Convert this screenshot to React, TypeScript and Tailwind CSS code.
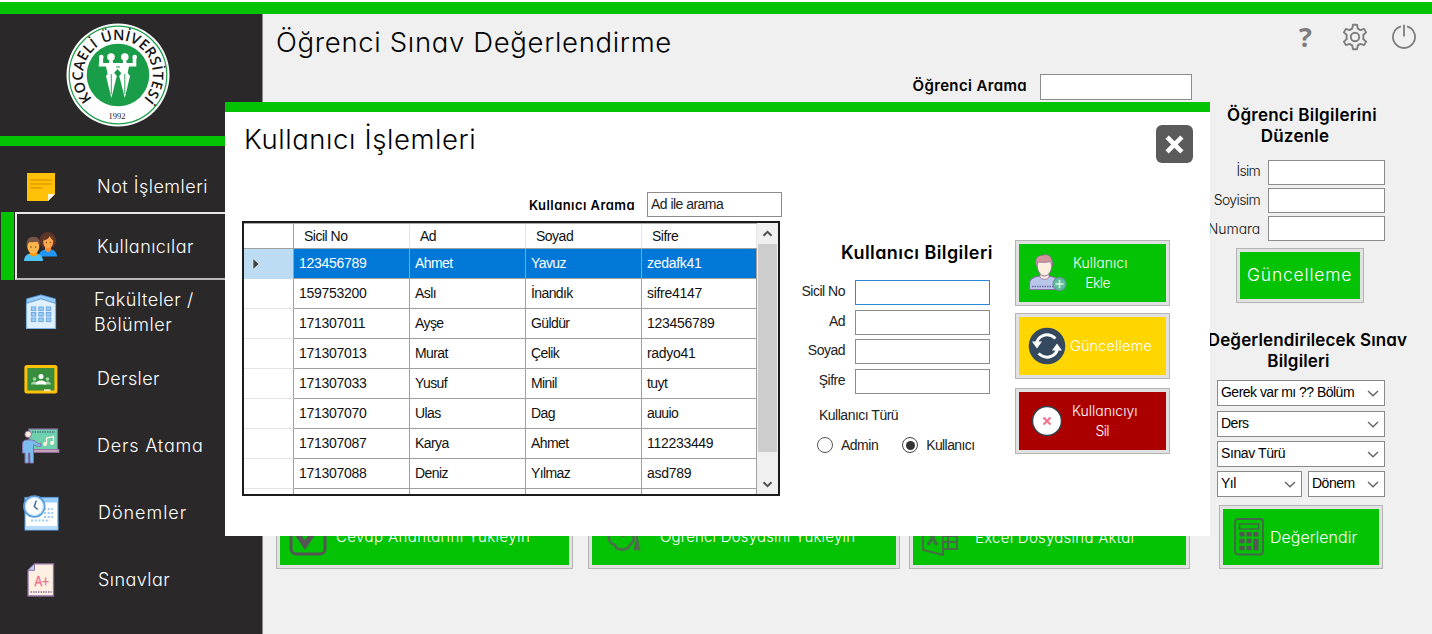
import type { ReactNode } from "react";

const gothic = "[font-family:Inter,sans-serif] [font-feature-settings:'cv11']";
const sans = "[font-family:'Liberation_Sans',Arial,sans-serif]";

function Logo() {
  return (
    <svg width="104" height="104" viewBox="0 0 104 104" className="block">
      <defs>
        <path id="ring" d="M 22.100 78.600 A 40 40 0 1 1 81.900 78.600" />
      </defs>
      <circle cx="52" cy="52" r="51.500" fill="#fff" />
      <circle cx="52" cy="52" r="48.800" fill="none" stroke="#1a9d49" strokeWidth="1.200" />
      <circle cx="52" cy="52" r="31.300" fill="#1a9d49" />
      <text fill="#151515" fontSize="14.500" fontWeight="600" fontFamily="Open Sans, sans-serif" dy="5">
        <textPath href="#ring" textLength="184" startOffset="0">
          KOCAELİ ÜNİVERSİTESİ
        </textPath>
      </text>
      <text x="51" y="96" textAnchor="middle" fontSize="8.500" fontFamily="Liberation Serif, serif" fill="#222">
        1992
      </text>
      <g fill="#fff">
        <circle cx="45" cy="34" r="3.800" />
        <circle cx="58.800" cy="34" r="3.800" />
        <path d="M33.500 34h3.600v6h6l.5-3h3l.5 3h9.600l.5-3h3l.5 3h6v-6h3.600v9.500h-7.300l-1.500 7h-6l-4-4.500-4 4.500h-6l-1.500-7h-7.300z" />
        <circle cx="35.300" cy="34" r="2.300" />
        <circle cx="68.700" cy="34" r="2.300" />
        <path d="M40 53 43 49h4.600L50.800 53 45.400 75z" />
        <path d="M53.200 53 56.400 49H61L64 53 58.800 75z" />
      </g>
      <path d="M45.300 51v20M58.800 51v20" stroke="#1a9d49" strokeWidth=".9" />
      <path d="M50 44h4" stroke="#1a9d49" strokeWidth="1" />
    </svg>
  );
}

function NoteIcon() {
  return (
    <svg width="36" height="36" viewBox="0 0 36 36">
      <path d="M4 4h28v21l-7 7H4z" fill="#ffc107" />
      <path d="M25 32v-7h7z" fill="#fff8e1" />
      <path d="M7 11h22M7 15h22M7 18.800h12.500" stroke="#e69a00" strokeWidth="1.600" />
    </svg>
  );
}

function UsersIcon() {
  return (
    <svg width="36" height="36" viewBox="0 0 36 36">
      <ellipse cx="24.700" cy="12.500" rx="8.500" ry="8.500" fill="#5d3528" />
      <path d="M16 28c0-5 5-7 9-7s9 2 9 7.500H16z" fill="#2196f3" />
      <path d="M22 18h6v4l-3 2.500-3-2.500z" fill="#ff8a30" />
      <ellipse cx="25.200" cy="14" rx="5" ry="6.200" fill="#ffa94d" />
      <path d="M20 13c2-1 6-2 6.500-5 1 2 3 4 4 5-1-6-9-8-10.500 0z" fill="#5d3528" />
      <circle cx="23.400" cy="14.500" r=".7" fill="#784719" />
      <circle cx="27.500" cy="14.500" r=".7" fill="#784719" />
      <path d="M1 33c0-6 5-8 9.500-8s9.500 2 9.500 8z" fill="#4fc3f7" />
      <path d="M7 22h7v4.500c-1 2.500-6 2.500-7 0z" fill="#ff9800" />
      <ellipse cx="10.300" cy="18.500" rx="6" ry="7.500" fill="#ffb74d" />
      <path d="M3.800 18C3 12 6 8.800 10.500 8.800S17.500 12 16.800 18c-1.500-2-2-4-2.500-4.500-2 1-7 .5-8.300 1z" fill="#795548" />
      <circle cx="8" cy="19" r=".8" fill="#784719" />
      <circle cx="12.600" cy="19" r=".8" fill="#784719" />
    </svg>
  );
}

function BuildingIcon() {
  return (
    <svg width="36" height="36" viewBox="0 0 36 36">
      <path d="M3.500 7.500 18 2l14.500 5.500v27h-29z" fill="#dff0fe" stroke="#7db3e6" strokeWidth="1.200" />
      <path d="M3.500 4.800 18 .8l14.500 4v4.500L18 4.800 3.500 9.300z" fill="#98ccfd" stroke="#4788c7" strokeWidth=".8" />
      <g fill="#98ccfd" stroke="#6ea5dc" strokeWidth=".9">
        {[13, 18.5, 24].map((y) =>
          [8.3, 15.8, 23.3].map((x) => <rect key={`${x}-${y}`} x={x} y={y} width="4.500" height="3.600" />)
        )}
      </g>
    </svg>
  );
}

function ClassIcon() {
  return (
    <svg width="36" height="36" viewBox="0 0 36 36">
      <rect x="1.400" y="4" width="33" height="28.500" rx="2.500" fill="#ffc107" />
      <rect x="4.400" y="7" width="27" height="22.500" fill="#388e3c" />
      <g fill="#a5d6a7">
        <circle cx="11.500" cy="18" r="1.800" />
        <circle cx="24.500" cy="18" r="1.800" />
        <path d="M8 23.500c0-4 7-4 7 0zM21 23.500c0-4 7-4 7 0z" />
      </g>
      <g fill="#fff">
        <circle cx="18" cy="15.500" r="2.500" />
        <path d="M12.500 23.500c0-5.500 11-5.500 11 0z" />
      </g>
      <rect x="21" y="28.300" width="6.500" height="2" fill="#ffe9b0" />
    </svg>
  );
}

function TeacherIcon() {
  return (
    <svg width="40" height="38" viewBox="0 0 40 38">
      <rect x="8" y="2" width="28.500" height="21" fill="#6fd0ad" stroke="#8d6c9f" strokeWidth="1.200" />
      <path d="M11 5h23" stroke="#49788a" strokeWidth="1.600" strokeDasharray="1.500 1" />
      <rect x="7" y="22.500" width="31" height="3" fill="#c9a0b8" stroke="#8d6c9f" strokeWidth=".8" />
      <path d="M25.500 17V11l7-1.500v6.500" fill="none" stroke="#fdf3e0" strokeWidth="1.300" />
      <circle cx="24" cy="17" r="2" fill="#fdf3e0" />
      <circle cx="31" cy="16" r="2" fill="#fdf3e0" />
      <path d="M1.500 17c0-3 2-4 4-4h5c4 0 5 4.500 9.500 3.500v2.500c-4 1-6-.5-7.500-1.500V36H8.800V26h-1.300v10H4V26H1.500z" fill="#7cbdf0" stroke="#7e6fa6" strokeWidth="1" />
      <circle cx="7.200" cy="7.300" r="3.300" fill="#fdeee0" stroke="#8d6c9f" strokeWidth="1" />
    </svg>
  );
}

function ScheduleIcon() {
  return (
    <svg width="38" height="38" viewBox="0 0 38 38">
      <rect x="3" y="3.500" width="33" height="32.500" fill="#fff" stroke="#5a9ad6" strokeWidth="1.200" />
      <rect x="3.600" y="4" width="32" height="4.500" fill="#98ccfd" />
      <rect x="3.600" y="32" width="32" height="3.500" fill="#b6dcfe" />
      <path d="M22 15h9M22 19h9M22 23h9M9 26.500h19" stroke="#98ccfd" strokeWidth="2" strokeDasharray="2 1.700" />
      <circle cx="12.300" cy="12.500" r="10.300" fill="#fff" stroke="#5a9ad6" strokeWidth="1.800" />
      <circle cx="12.300" cy="12.500" r="8.900" fill="none" stroke="#b6dcfe" strokeWidth="1" />
      <path d="m14.300 6.500-2 6 3.500 3" fill="none" stroke="#3f6f9f" strokeWidth="1.500" />
    </svg>
  );
}

function ExamIcon() {
  return (
    <svg width="30" height="36" viewBox="0 0 30 36">
      <path d="M8.500 1.800h19V34H2V8.300z" fill="#fdf0e2" stroke="#8d6c9f" strokeWidth="1.300" />
      <path d="M8.500 1.800v6.500H2z" fill="#b9d4f2" stroke="#8d6c9f" strokeWidth="1" />
      <path d="M4.500 30h21" stroke="#8d6c9f" strokeWidth="1.400" strokeDasharray="1.500 1" />
      <text x="8.500" y="23.500" fontSize="14" fontFamily="Liberation Sans, sans-serif" fill="#ee6f92" stroke="#ee6f92" strokeWidth=".4" textLength="14.500" lengthAdjust="spacingAndGlyphs">
        A+
      </text>
    </svg>
  );
}

function NavItem({ icon, children }: { icon: ReactNode; children: ReactNode }) {
  return (
    <div className="flex h-[67px] items-center">
      <div className="flex w-[82px] shrink-0 items-center justify-center">{icon}</div>
      {children}
    </div>
  );
}

function Chevron() {
  return (
    <svg width="12" height="7" viewBox="0 0 12 7" className="shrink-0">
      <path d="m1 1 5 4.800L11 1" fill="none" stroke="#606060" strokeWidth="1.300" />
    </svg>
  );
}

function Select({ label, className }: { label: string; className: string }) {
  return (
    <div className={`flex h-[26px] items-center justify-between border border-[#8a8a8a] bg-white pr-[5px] pl-[3px] text-[14px] text-black ${sans} ${className}`}>
      <span className="-mt-px whitespace-nowrap">{label}</span>
      <Chevron />
    </div>
  );
}

function Box({ className = "border-[#8c8c8c]" }: { className?: string }) {
  return <input className={`block border bg-white outline-none ${className}`} />;
}

function Framed({ className, inner, children }: { className: string; inner: string; children: ReactNode }) {
  return (
    <button className={`block border border-[#b4b4b4] bg-[#e1e1e1] p-[3px] ${className}`}>
      <span className={`flex h-full w-full items-center overflow-hidden text-left font-light whitespace-nowrap text-white ${gothic} ${inner}`}>
        {children}
      </span>
    </button>
  );
}

const users = [
  ["123456789", "Ahmet", "Yavuz", "zedafk41"],
  ["159753200", "Aslı", "İnandık", "sifre4147"],
  ["171307011", "Ayşe", "Güldür", "123456789"],
  ["171307013", "Murat", "Çelik", "radyo41"],
  ["171307033", "Yusuf", "Minil", "tuyt"],
  ["171307070", "Ulas", "Dag", "auuio"],
  ["171307087", "Karya", "Ahmet", "112233449"],
  ["171307088", "Deniz", "Yılmaz", "asd789"],
];

const grid = "grid grid-cols-[50px_116px_116px_116px_115px]";

function UserTable() {
  return (
    <div className={`flex h-[275px] w-[538px] overflow-hidden border-2 border-[#1c1c1c] bg-white text-[14px] text-[#111] ${sans}`}>
      <div className="w-[513px]">
        <div className={`${grid} h-[26px] border-t border-b border-t-[#aaa] border-b-[#a0a0a0]`}>
          <div className="border-r border-[#a0a0a0]" />
          {["Sicil No", "Ad", "Soyad", "Sifre"].map((h) => (
            <div key={h} className="border-r border-[#e5e5e5] pl-[10px] leading-[24px] tracking-[-0.5px]">
              {h}
            </div>
          ))}
        </div>
        {users.map((row, r) => (
          <div key={row[0]} className={`${grid} h-[30px]`}>
            <div className={`flex items-center border-r border-b border-r-[#a0a0a0] pl-[8px] ${r === 0 ? "border-b-[#bcdcf4] bg-[#bcdcf4]" : "border-b-[#e5e5e5]"}`}>
              {r === 0 && (
                <svg width="8" height="12" viewBox="0 0 8 12">
                  <path d="M1 .5 7 6 1 11.500z" fill="#404040" stroke="#fff" strokeWidth=".6" />
                </svg>
              )}
            </div>
            {row.map((c, i) => (
              <div
                key={i}
                className={`border-r border-b border-[#a0a0a0] pl-[5px] leading-[29px] ${/\d/.test(c) ? "tracking-[-0.3px]" : "tracking-[-0.6px]"} ${r === 0 ? "bg-[#0078d7] text-white" : ""}`}
              >
                {c}
              </div>
            ))}
          </div>
        ))}
        <div className={`${grid} h-[8px]`}>
          {[0, 1, 2, 3, 4].map((i) => (
            <div key={i} className="border-r border-[#a0a0a0]" />
          ))}
        </div>
      </div>
      <div className="flex w-[21px] flex-col items-center bg-[#f0f0f0]">
        <div className="flex h-[21px] items-center">
          <svg width="11" height="7" viewBox="0 0 11 7">
            <path d="m1.500 5.800 4-4 4 4" fill="none" stroke="#505050" strokeWidth="2" />
          </svg>
        </div>
        <div className="h-[208px] w-[19px] bg-[#cdcdcd]" />
        <div className="mt-auto flex h-[20px] items-center">
          <svg width="11" height="7" viewBox="0 0 11 7">
            <path d="m1.500 1.200 4 4 4-4" fill="none" stroke="#505050" strokeWidth="2" />
          </svg>
        </div>
      </div>
    </div>
  );
}

function FormRow({ label, focus = false }: { label: string; focus?: boolean }) {
  return (
    <div className="flex items-center">
      <span className="-mt-[2px] w-[54px] text-right whitespace-nowrap">{label}</span>
      <Box className={`ml-[10px] h-[25px] w-[135px] ${focus ? "border-[#2b88d8]" : "border-[#8c8c8c]"}`} />
    </div>
  );
}

function UserModal() {
  return (
    <div className="absolute top-[102px] left-[225px] flex h-[434px] w-[985px] flex-col bg-white">
      <div className="h-[10px] bg-[#04c204]" />
      <div className="flex h-[80px] items-start justify-between pr-[17px] pl-[19px]">
        <h2 className={`mt-[7px] text-[27.500px] leading-[40px] font-light tracking-[0.58px] whitespace-nowrap text-black ${gothic}`}>
          Kullanıcı İşlemleri
        </h2>
        <button className="mt-[13px] flex h-[38px] w-[37px] items-center justify-center rounded-[6px] bg-[#5b5b5b]">
          <svg width="19" height="19" viewBox="0 0 19 19">
            <path d="m3.700 3.700 11.600 11.600M15.300 3.700 3.700 15.300" stroke="#fff" strokeWidth="4.600" strokeLinecap="square" />
          </svg>
        </button>
      </div>
      <div className="flex pl-[17px]">
        <div className="w-[540px] shrink-0">
          <div className="flex h-[25px] items-center justify-end">
            <span className={`mt-[3px] text-[13px] font-semibold tracking-[0.44px] whitespace-nowrap text-black ${gothic}`}>Kullanıcı Arama</span>
            <div className={`ml-[12px] h-[25px] w-[135px] border border-[#8c8c8c] pl-[3px] text-[14px] leading-[22px] tracking-[-0.53px] text-[#222] ${sans}`}>
              Ad ile arama
            </div>
          </div>
          <div className="mt-[4px]">
            <UserTable />
          </div>
        </div>
        <div className={`ml-[9px] w-[199px] pt-[48px] text-[14px] tracking-[-0.5px] text-[#222] ${sans}`}>
          <h3 className={`ml-[50px] text-[18px] leading-[26px] font-semibold tracking-[0.42px] whitespace-nowrap text-black ${gothic}`}>
            Kullanıcı Bilgileri
          </h3>
          <div className="mt-[14px] flex flex-col">
            <FormRow label="Sicil No" focus />
            <div className="mt-[5px]">
              <FormRow label="Ad" />
            </div>
            <div className="mt-[4px]">
              <FormRow label="Soyad" />
            </div>
            <div className="mt-[5px]">
              <FormRow label="Şifre" />
            </div>
          </div>
          <div className="mt-[11px] ml-[28px] leading-[20px]">Kullanıcı Türü</div>
          <div className="mt-[11px] ml-[26px] flex h-[18px] items-center">
            <span className="h-[16px] w-[16px] rounded-full border border-[#555]" />
            <span className="ml-[8px]">Admin</span>
            <span className="ml-[24px] flex h-[16px] w-[16px] items-center justify-center rounded-full border border-[#444]">
              <span className="h-[9px] w-[9px] rounded-full bg-[#333]" />
            </span>
            <span className="ml-[8px] tracking-[-0.6px]">Kullanıcı</span>
          </div>
        </div>
        <div className="ml-[25px] flex flex-col pt-[48px]">
          <Framed className="h-[66px] w-[155px]" inner="bg-[#04c204] pl-[9px]">
            <svg width="40" height="40" viewBox="0 0 40 40" className="shrink-0">
              <path d="M1.500 36.500v-6c0-5 5-7 11-7.500h8c6 .5 10 3 10 7.500v6z" fill="#b9c5ea" stroke="#8d6c9f" strokeWidth="1.200" />
              <path d="M12 20h9v4c-1 3-8 3-9 0z" fill="#fdeee0" stroke="#8d6c9f" strokeWidth=".8" />
              <path d="M9 11c0-4 3-6 7.500-6S24 7 24 11c0 6-3 12-7.500 12S9 17 9 11z" fill="#fdeee0" stroke="#8d6c9f" strokeWidth="1" />
              <path d="M8 13C6.500 4 11 2.500 14 2.500c5-2 11-.5 10.500 10.500-1-1-1.500-3-2-4.500-4 1-9 1-12 .5-1 1-1.500 3-2.500 4z" fill="#d3959c" stroke="#8d6c9f" strokeWidth=".8" />
              <path d="M4 33.500h22" stroke="#6c6fa0" strokeWidth="1.300" strokeDasharray="1.500 1" />
              <circle cx="31.500" cy="31" r="6.500" fill="#5fbf9a" stroke="#6b8fa0" strokeWidth="1.200" />
              <path d="M31.500 27v8M27.500 31h8" stroke="#d9f5e8" strokeWidth="1.600" />
            </svg>
            <span className="ml-[5px] text-center text-[14px] leading-[20px]">
              Kullanıcı
              <br />
              <span className="mr-[5px] tracking-[-0.6px]">Ekle</span>
            </span>
          </Framed>
          <Framed className="mt-[7px] h-[66px] w-[155px]" inner="bg-[#ffd600] pl-[9px]">
            <svg width="38" height="38" viewBox="0 0 38 38" className="shrink-0">
              <circle cx="19" cy="19" r="18.300" fill="#34495e" />
              <path d="M8.200 18C9 9 19 4 27.500 11.500" fill="none" stroke="#fff" strokeWidth="3" />
              <path d="M29.800 20C29 29 19 34 10.500 26.500" fill="none" stroke="#fff" strokeWidth="3" />
              <path d="M4 14.500h10L9 21.500zM24 23.500h10L29 16.500z" fill="#fff" />
            </svg>
            <span className="ml-[4px] text-[14.500px] tracking-[0.14px]">Güncelleme</span>
          </Framed>
          <Framed className="mt-[9px] h-[66px] w-[155px]" inner="bg-[#ac0000] pl-[12px]">
            <svg width="32" height="32" viewBox="0 0 32 32" className="shrink-0">
              <circle cx="16" cy="16" r="14.500" fill="#fff" stroke="#34404c" strokeWidth="1.500" />
              <path d="m12.500 12.500 7 7M19.500 12.500l-7 7" stroke="#f4708a" strokeWidth="2" />
            </svg>
            <span className="ml-[9px] text-center text-[14px] leading-[20px]">
              Kullanıcıyı
              <br />
              <span className="mr-[5px] tracking-[-0.6px]">Sil</span>
            </span>
          </Framed>
        </div>
      </div>
    </div>
  );
}

function Sidebar() {
  const text = `text-[18px] leading-[25px] font-light whitespace-nowrap text-white ${gothic}`;
  return (
    <aside className="flex w-[263px] shrink-0 flex-col border-r border-[#8a8a8a] bg-[#2a2829]">
      <div className="flex h-[122px] shrink-0 items-start pt-[9px] pl-[66px]">
        <Logo />
      </div>
      <div className="h-[10px] shrink-0 bg-[#04c204]" />
      <div className="flex flex-col pt-[7px]">
        <NavItem icon={<NoteIcon />}>
          <span className={`ml-[15px] tracking-[0.49px] ${text}`}>Not İşlemleri</span>
        </NavItem>
        <div className="-mt-[8px] -mb-[2px] flex h-[68px]">
          <div className="mr-[1px] ml-[1px] w-[13px] bg-[#04c204]" />
          <div className="flex flex-1 items-center border-2 border-[#e8e8e8] border-b-[#b8b8b8] pl-[6px]">
            <UsersIcon />
            <span className={`ml-[38px] tracking-[0.45px] ${text}`}>Kullanıcılar</span>
          </div>
        </div>
        <NavItem icon={<BuildingIcon />}>
          <span className={`ml-[12px] tracking-[0.52px] ${text}`}>
            Fakülteler /<br />
            Bölümler
          </span>
        </NavItem>
        <NavItem icon={<ClassIcon />}>
          <span className={`ml-[15px] tracking-[0.36px] ${text}`}>Dersler</span>
        </NavItem>
        <NavItem icon={<TeacherIcon />}>
          <span className={`ml-[15px] tracking-[0.8px] ${text}`}>Ders Atama</span>
        </NavItem>
        <NavItem icon={<ScheduleIcon />}>
          <span className={`ml-[16px] tracking-[0.96px] ${text}`}>Dönemler</span>
        </NavItem>
        <NavItem icon={<ExamIcon />}>
          <span className={`ml-[16px] tracking-[0.45px] ${text}`}>Sınavlar</span>
        </NavItem>
      </div>
    </aside>
  );
}

export default function App() {
  const heading = `text-center text-[17px] leading-[21px] font-semibold whitespace-nowrap text-black ${gothic}`;
  const label = `w-[66px] text-right text-[14px] font-light whitespace-nowrap text-[#111] ${gothic}`;
  return (
    <div className="relative flex h-[634px] w-[1432px] flex-col overflow-hidden bg-[#f0f0f0]">
      <div className="h-[14px] shrink-0 border-t-2 border-white bg-[#04c204]" />
      <div className="flex flex-1">
        <Sidebar />
        <main className="flex flex-1 flex-col">
          <header className="flex h-[58px] items-start justify-between pr-[15px] pl-[13px]">
            <h1 className={`mt-[8px] text-[27.500px] leading-[40px] font-light tracking-[0.66px] whitespace-nowrap text-black ${gothic}`}>
              Öğrenci Sınav Değerlendirme
            </h1>
            <div className="flex items-center pt-[9px] text-[#7d7d7d]">
              <span className="mr-[30px] [font-family:'Open_Sans',sans-serif] text-[27px] leading-[28px] font-bold">?</span>
              <svg width="26" height="28" viewBox="0 0 26 28" className="mr-[23px]" fill="none" stroke="currentColor" strokeWidth="1.900" strokeLinejoin="round">
                <path d="M11 1.800h4l.8 3.800 2.600 1.500 3.700-1.200 2 3.500-2.900 2.600q.5 2 0 4l2.900 2.600-2 3.500-3.700-1.200-2.600 1.500-.8 3.800h-4l-.8-3.800-2.600-1.500-3.700 1.200-2-3.500L4.800 16q-.5-2 0-4L1.900 9.400l2-3.500 3.700 1.200 2.600-1.500z" />
                <circle cx="13" cy="14" r="4.200" />
              </svg>
              <svg width="26" height="26" viewBox="0 0 26 26" fill="none" stroke="currentColor" strokeWidth="1.800">
                <path d="M10 2.400a11 11 0 1 0 6 0M13 .8v11.700" />
              </svg>
            </div>
          </header>
          <div className="flex flex-1">
            <section className="flex w-[934px] flex-col">
              <div className="flex h-[29px] items-center justify-end pr-[5px]">
                <span className={`text-[15px] font-semibold tracking-[0.36px] whitespace-nowrap text-black ${gothic}`}>Öğrenci Arama</span>
                <Box className="ml-[13px] h-[26px] w-[152px] border-[#8c8c8c]" />
              </div>
              <div className="h-[403px]" />
              <div className="flex pl-[13px]">
                <Framed className="h-[65px] w-[297px]" inner="bg-[#04c204] pl-[9px] text-[15px]">
                  <svg width="38" height="38" viewBox="0 0 38 38" className="shrink-0" fill="none" stroke="#555">
                    <rect x="2" y="2" width="34" height="34" rx="5" strokeWidth="3" />
                    <path d="m9 17 7 10 12-18" strokeWidth="5.500" />
                  </svg>
                  <span className="mt-[2px] ml-[9px] tracking-[0.4px]">Cevap Anahtarını Yükleyin</span>
                </Framed>
                <Framed className="ml-[15px] h-[65px] w-[312px]" inner="bg-[#04c204] pl-[14px] text-[15px]">
                  <svg width="38" height="38" viewBox="0 0 38 38" className="shrink-0" fill="none" stroke="#4f6a4f" strokeWidth="2.400">
                    <path d="m1 10 16-8 16 8-16 8zM5 13c-5 9 0 13 4 14 1 6 13 6 15 0 4-3 5-8 1-14M31 12v14" />
                    <path d="m31 22-2 9h4z" fill="#4f6a4f" />
                  </svg>
                  <span className="mt-[2px] ml-[16px] tracking-[0.19px]">Öğrenci Dosyasını Yükleyin</span>
                </Framed>
                <Framed className="ml-[9px] h-[65px] w-[281px]" inner="bg-[#04c204] pl-[8px] text-[15px]">
                  <svg width="38" height="38" viewBox="0 0 38 38" className="shrink-0" fill="none" stroke="#476a47" strokeWidth="2">
                    <path d="M2 6 22 1v36L2 32zM22 6h14v25H22M27 6v25M22 12h14M22 18h14M22 24h14" />
                    <path d="m7 12 9 15M16 12 7 27" strokeWidth="3" />
                  </svg>
                  <span className="mt-[4px] ml-[16px] tracking-[0.25px]">Excel Dosyasına Aktar</span>
                </Framed>
              </div>
            </section>
            <section className="flex w-[235px] flex-col pt-[33px]">
              <div className="w-[210px]">
                <h2 className={`tracking-[0.25px] ${heading}`}>
                  Öğrenci Bilgilerini
                  <br />
                  <span className="mr-[14px]">Düzenle</span>
                </h2>
              </div>
              <div className="mt-[13px] flex flex-col gap-[3px]">
                <div className="flex items-center">
                  <span className={`-mt-[5px] -ml-[3px] tracking-[-0.7px] ${label}`}>İsim</span>
                  <Box className="ml-[8px] h-[25px] w-[117px] border-[#8c8c8c]" />
                </div>
                <div className="flex items-center">
                  <span className={`-mt-[3px] -ml-[3px] tracking-[-0.62px] ${label}`}>Soyisim</span>
                  <Box className="ml-[8px] h-[25px] w-[117px] border-[#8c8c8c]" />
                </div>
                <div className="flex items-center">
                  <span className={`-mt-px -ml-[3px] tracking-[-0.1px] ${label}`}>Numara</span>
                  <Box className="ml-[8px] h-[25px] w-[117px] border-[#8c8c8c]" />
                </div>
              </div>
              <Framed className="mt-[7px] ml-[39px] h-[55px] w-[128px]" inner="bg-[#04c204] pl-[7px] text-[17.500px] tracking-[0.8px]">
                Güncelleme
              </Framed>
              <div className="mt-[27px] w-[221px]">
                <h2 className={`tracking-[0.14px] ${heading}`}>
                  Değerlendirilecek Sınav
                  <br />
                  <span className="mr-[18px]">Bilgileri</span>
                </h2>
              </div>
              <div className="mt-[8px] ml-[20px] flex w-[168px] flex-col gap-[5px]">
                <Select label="Gerek var mı ?? Bölüm" className="w-full tracking-[-0.52px]" />
                <Select label="Ders" className="w-full tracking-[-0.5px]" />
                <Select label="Sınav Türü" className="-mt-px w-full tracking-[-0.4px]" />
                <div className="-mt-px flex justify-between">
                  <Select label="Yıl" className="w-[85px] tracking-[-0.5px]" />
                  <Select label="Dönem" className="w-[77px] tracking-[-0.5px]" />
                </div>
              </div>
              <Framed className="mt-[8px] ml-[22px] h-[64px] w-[164px]" inner="bg-[#04c204] pl-[11px] text-[16px]">
                <svg width="30" height="38" viewBox="0 0 30 38" className="shrink-0" fill="#555">
                  <rect x="1" y="1" width="28" height="35.500" rx="3" fill="none" stroke="#45654a" strokeWidth="1.800" />
                  <rect x="5.500" y="6" width="19" height="5" fill="none" stroke="#45654a" strokeWidth="1.500" />
                  <path d="M5.500 14h5v4.500h-5zM12.500 14h5v4.500h-5zM19.500 14h5v4.500h-5zM5.500 20.800h5v4.500h-5zM12.500 20.800h5v4.500h-5zM19.500 20.800h5V32.300h-5zM5.500 27.700h5v4.600h-5zM12.500 27.700h5v4.600h-5z" />
                </svg>
                <span className="-mt-px ml-[6px]">Değerlendir</span>
              </Framed>
            </section>
          </div>
        </main>
      </div>
      <UserModal />
    </div>
  );
}
